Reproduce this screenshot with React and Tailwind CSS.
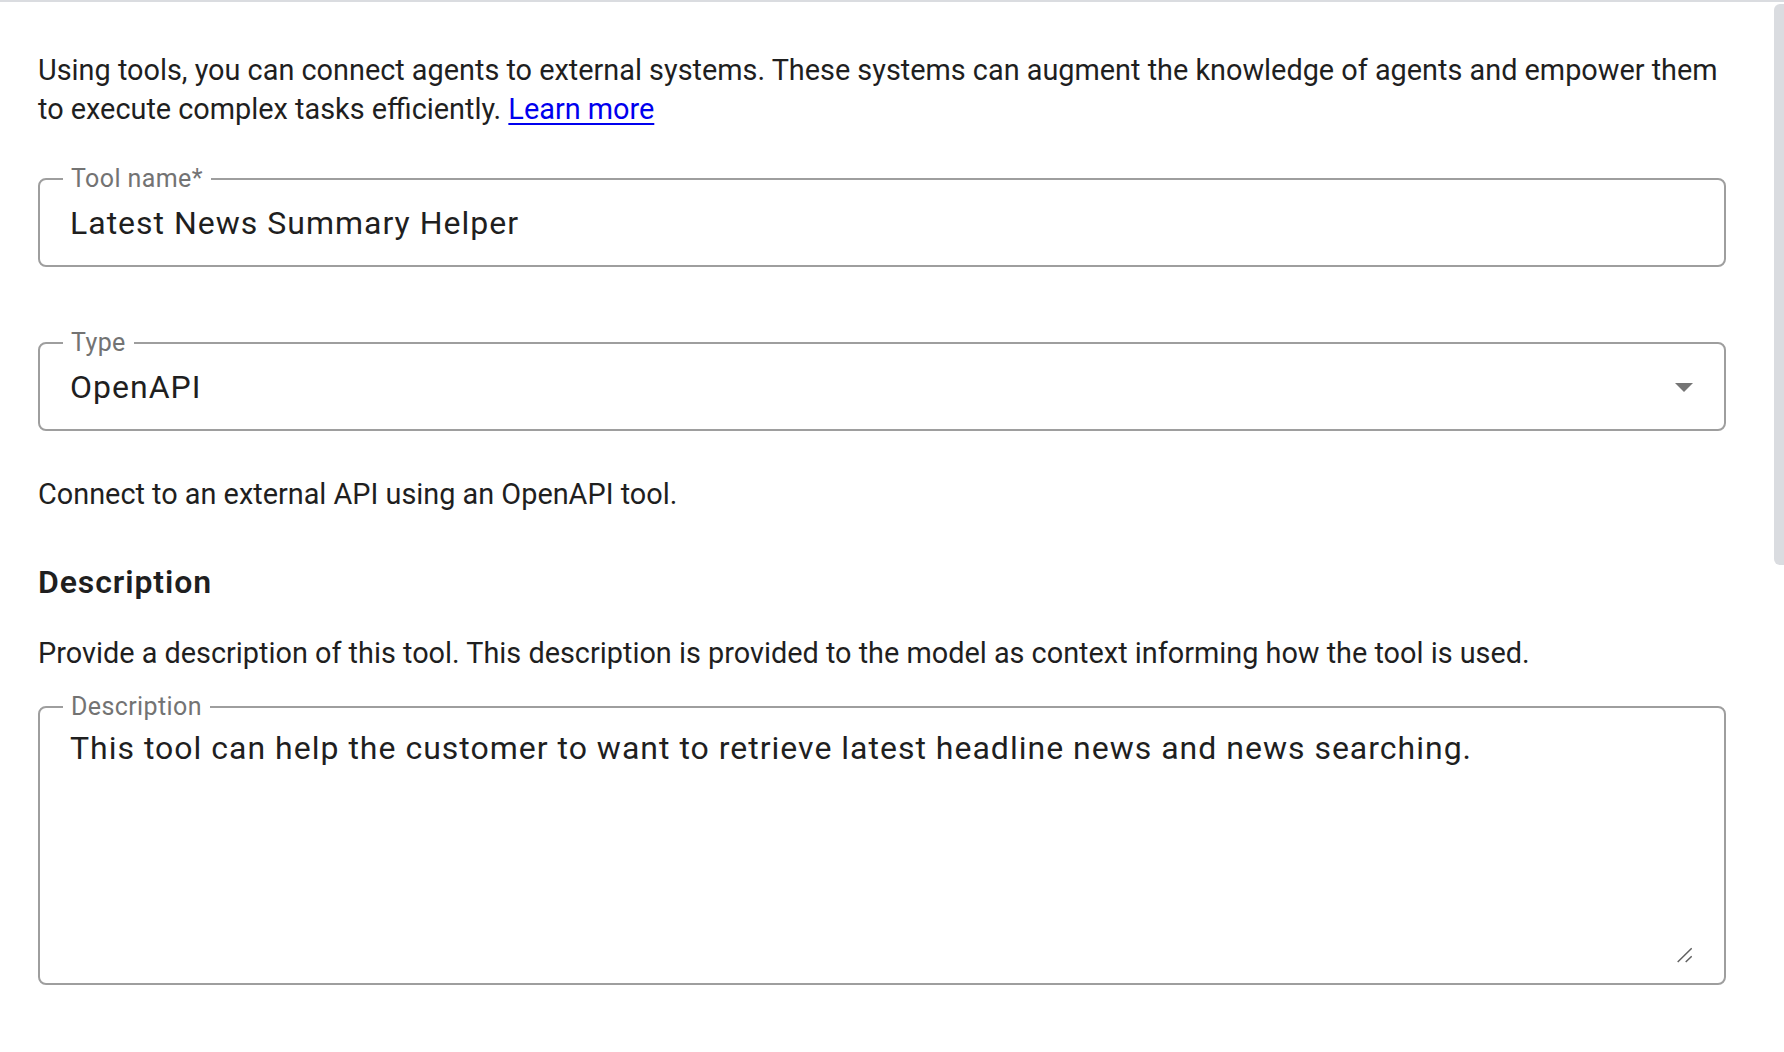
import React from 'react';

const Field = ({ label, children, className = '' }) => (
  <fieldset className={`border-2 border-[#9e9e9e] rounded-[8px] px-[30px] m-0 ${className}`}>
    <legend className="-ml-[7px] px-[8px] text-[25px] leading-[24px] text-[#737373] tracking-[0.4px]">{label}</legend>
    {children}
  </fieldset>
);

const App = () => {
  return (
    <div className="relative min-h-screen bg-white font-['Roboto',sans-serif] text-[#1f1f1f]">
      {/* top edge */}
      <div className="h-[2px] bg-[#dadce0]" />

      {/* scrollbar thumb */}
      <div className="absolute right-0 top-[4px] w-[10px] h-[561px] rounded-l-[6px] bg-[#dadce0]" />

      <main className="w-[1688px] ml-[38px] pt-[49px]">
        <p className="text-[28.85px] leading-[39px] text-[#1f1f1f]">
          Using tools, you can connect agents to external systems. These systems can augment the knowledge of agents and empower them to execute complex tasks efficiently.{' '}
          <a href="#" className="text-[#0000ee] underline underline-offset-[4px]">Learn more</a>
        </p>

        <Field label="Tool name*" className="mt-[38px]">
          <div className="pt-[12px] pb-[22px] text-[32px] leading-[40px] tracking-[1px] text-[#1f1f1f]">
            Latest News Summary Helper
          </div>
        </Field>

        <Field label="Type" className="mt-[64px]">
          <div className="flex items-center justify-between pt-[12px] pb-[22px]">
            <span className="text-[32px] leading-[40px] tracking-[1px] text-[#1f1f1f]">OpenAPI</span>
            <svg width="18" height="9" viewBox="0 0 18 9" className="mr-[1px]">
              <path d="M0 0 L18 0 L9 9 Z" fill="#757575" />
            </svg>
          </div>
        </Field>

        <p className="mt-[43px] text-[28.85px] leading-[40px]">Connect to an external API using an OpenAPI tool.</p>

        <h2 className="mt-[50px] text-[32px] leading-[36px] font-semibold tracking-[0.9px]">Description</h2>

        <p className="mt-[33px] text-[28.85px] leading-[40px]">
          Provide a description of this tool. This description is provided to the model as context informing how the tool is used.
        </p>

        <Field label="Description" className="mt-[22px]">
          <div className="relative h-[264px] pt-[9px]">
            <div className="text-[32px] leading-[40px] tracking-[1px] text-[#1f1f1f]">
              This tool can help the customer to want to retrieve latest headline news and news searching.
            </div>
            <svg width="16" height="16" viewBox="0 0 16 16" className="absolute right-[2px] bottom-[20px]">
              <path d="M1.7 15 L15.7 1.3 M9.7 15 L15.7 9.3" stroke="#616161" strokeWidth="1.5" />
            </svg>
          </div>
        </Field>
      </main>
    </div>
  );
};

export default App;
